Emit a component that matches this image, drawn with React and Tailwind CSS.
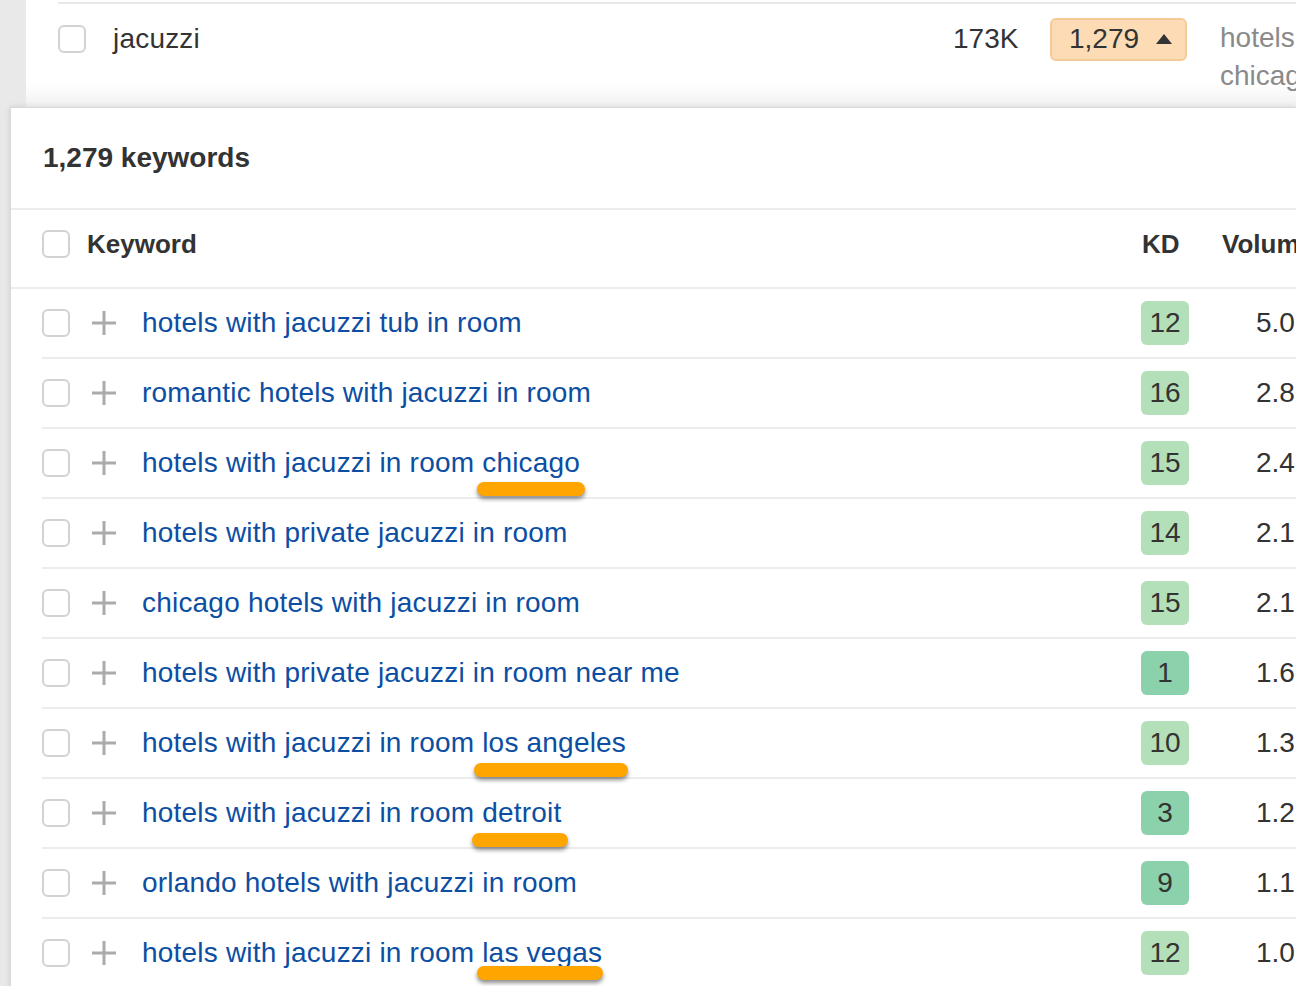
import React from "react";

const rows = [
  { text: "hotels with jacuzzi tub in room", kd: 12, vol: "5.0K" },
  { text: "romantic hotels with jacuzzi in room", kd: 16, vol: "2.8K" },
  { text: "hotels with jacuzzi in room ", hl: "chicago", pill: { l: -5, w: 108, t: 33 }, kd: 15, vol: "2.4K" },
  { text: "hotels with private jacuzzi in room", kd: 14, vol: "2.1K" },
  { text: "chicago hotels with jacuzzi in room", kd: 15, vol: "2.1K" },
  { text: "hotels with private jacuzzi in room near me", kd: 1, vol: "1.6K" },
  { text: "hotels with jacuzzi in room ", hl: "los angeles", pill: { l: -8, w: 154, t: 34 }, kd: 10, vol: "1.3K" },
  { text: "hotels with jacuzzi in room ", hl: "detroit", pill: { l: -10, w: 96, t: 34 }, kd: 3, vol: "1.2K" },
  { text: "orlando hotels with jacuzzi in room", kd: 9, vol: "1.1K" },
  { text: "hotels with jacuzzi in room ", hl: "las vegas", pill: { l: -5, w: 126, t: 27 }, kd: 12, vol: "1.0K" },
];

function Checkbox() {
  return <div className="w-[28px] h-[28px] shrink-0 rounded-[6px] border-2 border-[#d2d2d2] bg-white" />;
}

function Plus() {
  return (
    <svg width="24" height="24" viewBox="0 0 24 24" className="shrink-0">
      <line x1="12" y1="0" x2="12" y2="24" stroke="#ababab" strokeWidth="3" />
      <line x1="0" y1="12" x2="24" y2="12" stroke="#ababab" strokeWidth="3" />
    </svg>
  );
}

export default function App() {
  return (
    <div className="w-[1296px] h-[986px] overflow-hidden bg-[#e9e9e9] font-['Liberation_Sans',Arial,Helvetica,sans-serif] text-[#333]">
      {/* top row */}
      <div className="ml-[26px] h-[107px] bg-[linear-gradient(to_bottom,#ffffff_78%,#f1f1f1)] pt-[2px]">
        <div className="ml-[32px] border-t-2 border-[#e8e8e8]">
          <div className="flex items-center h-[70px] whitespace-nowrap">
            <Checkbox />
            <div className="ml-[27px] w-[840px] shrink-0 text-[28px] leading-[28px] tracking-[0.2px] text-[#333]">jacuzzi</div>
            <div className="w-[65px] shrink-0 text-right text-[28px] leading-[28px] text-[#333]">173K</div>
            <div className="ml-[32px] w-[137px] h-[43px] shrink-0 rounded-[6px] border-2 border-[#f4c996] bg-[#fddcb5] flex items-center pl-[17px]">
              <span className="text-[28px] leading-[28px] text-[#333]">1,279</span>
              <svg width="16" height="10" viewBox="0 0 16 10" className="ml-[17px]">
                <polygon points="8,0 16,10 0,10" fill="#333" />
              </svg>
            </div>
            <div className="ml-[33px] self-start mt-[15px] w-[130px] shrink-0 whitespace-normal text-[28px] leading-[38px] text-[#8a8a8a]">
              hotels chicago
            </div>
          </div>
        </div>
      </div>

      {/* popover */}
      <div className="ml-[10px] bg-white border-l border-t border-[#d9d9d9] shadow-[0_0_6px_rgba(0,0,0,0.12)] h-[900px]">
        <div className="h-[102px] pl-[32px] flex items-center border-b-2 border-[#ececec] text-[28px] font-bold text-[#333] whitespace-nowrap">
          1,279 keywords
        </div>
        <div className="h-[79px] pl-[31px] pb-[10px] flex items-center border-b-2 border-[#ececec] whitespace-nowrap">
          <Checkbox />
          <div className="ml-[17px] w-[1055px] shrink-0 text-[26px] font-bold leading-[26px]">Keyword</div>
          <div className="w-[37px] shrink-0 text-[26px] font-bold leading-[26px]">KD</div>
          <div className="ml-[43px] shrink-0 text-[26px] font-bold leading-[26px]">Volume</div>
        </div>
        {rows.map((r, i) => (
          <div key={i} className="ml-[31px] border-b-2 border-[#ececec]">
            <div className="h-[68px] flex items-center whitespace-nowrap">
              <Checkbox />
              <div className="ml-[22px]">
                <Plus />
              </div>
              <div className="ml-[26px] w-[999px] shrink-0 text-[28px] leading-[28px] tracking-[0.2px] text-[#0c4ea2]">
                {r.text}
                {r.hl && (
                  <span className="relative inline-block">
                    {r.hl}
                    <span
                      className="absolute h-[14px] rounded-full bg-[#ffa500] shadow-[0_3px_4px_rgba(0,0,0,0.45)]"
                      style={{ left: r.pill.l, width: r.pill.w, top: r.pill.t }}
                    />
                  </span>
                )}
              </div>
              <div
                className={
                  "w-[48px] h-[44px] shrink-0 rounded-[6px] flex items-center justify-center text-[28px] leading-[28px] text-[#333] " +
                  (r.kd < 10 ? "bg-[#8bd1ab]" : "bg-[#b3dfb9]")
                }
              >
                {r.kd}
              </div>
              <div className="ml-[67px] shrink-0 text-[28px] leading-[28px] text-[#333]">{r.vol}</div>
            </div>
          </div>
        ))}
      </div>
    </div>
  );
}
